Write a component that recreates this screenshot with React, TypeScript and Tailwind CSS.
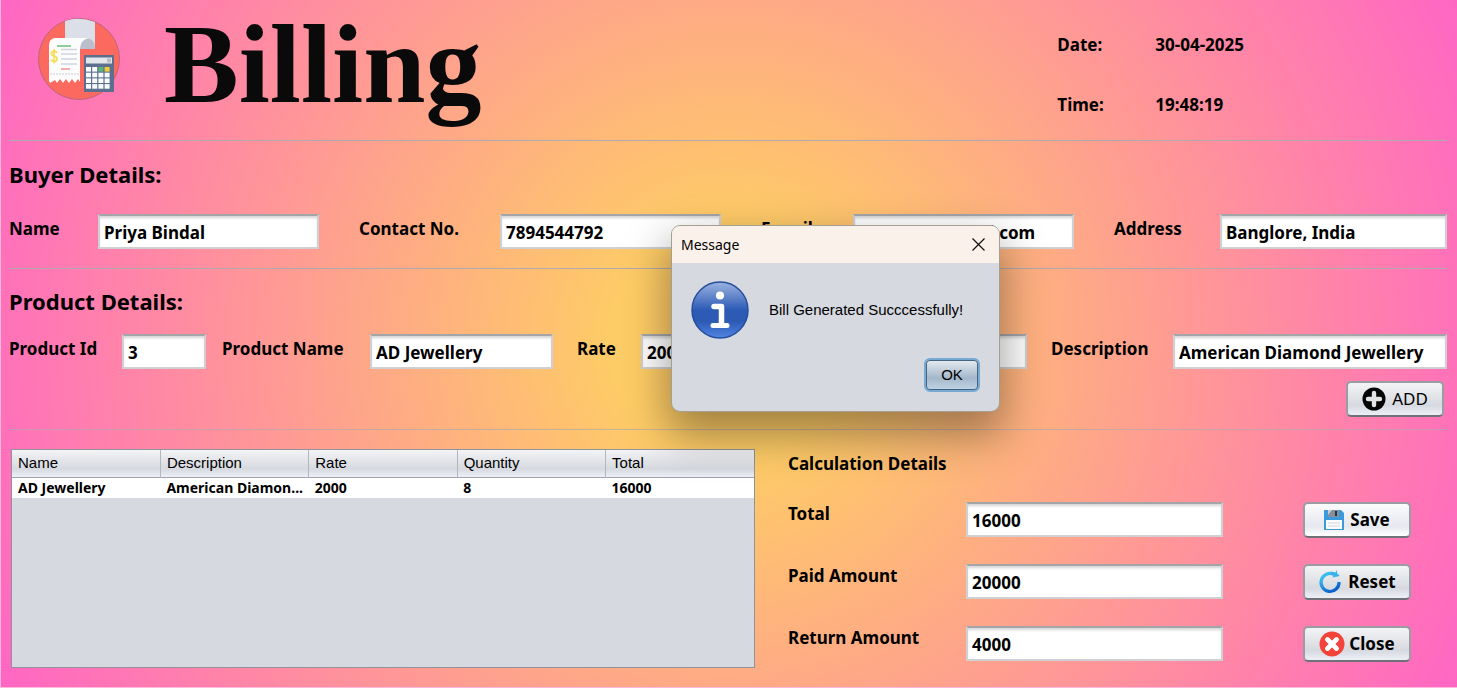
import type { ReactNode } from "react";

const labelText = "text-[17px] font-bold text-black whitespace-nowrap";

function Field({ id, label, value, labelClass = "leading-[30px]" }: { id: string; label: string; value: string; labelClass?: string }) {
  return (
    <>
      <label htmlFor={id} className={`${labelText} ${labelClass}`}>
        {label}
      </label>
      <input
        id={id}
        type="text"
        defaultValue={value}
        className="h-[35px] w-full min-w-0 border-2 border-[#cfd0d4] border-t-[#a4a5a9] bg-white px-1 pt-0.5 text-[17px] font-bold text-black shadow-[inset_0_3px_3px_-1px_#d4d4d6] outline-none"
      />
    </>
  );
}

function ActionButton({ children, className }: { children: ReactNode; className: string }) {
  return (
    <button
      type="button"
      className={`flex items-center justify-center rounded-[5px] border-2 border-[#9a9ca3] border-b-[#6f7178] text-[17px] text-black ${className}`}
    >
      {children}
    </button>
  );
}

const greyFill = "bg-linear-to-b from-[#f4f4f6] via-[#d6d9df] via-70% to-[#eef0f8]";
const lightFill = "bg-linear-to-b from-[#fbfbfc] via-[#e6e8ef] via-70% to-white";

function BillingLogo() {
  return (
    <svg viewBox="0 0 82 82" className="size-[82px]" aria-hidden="true">
      <circle cx="41" cy="41" r="40.5" fill="#fc6a5f" stroke="#b9667f" strokeWidth="1" />
      <path d="M27 3 Q41-2 57 4 V31 H27Z" fill="#dcdfe7" />
      <path d="M42 31 Q42 21 50 20.500 Q57 21.500 57 31Z" fill="#b9bfcb" />
      <path d="M17 20 H50 Q43 22 42 30 V64 L40 61 L37 65 L34 61 L31 65 L28 61 L25 65 L22 61 L19 65 L17 62 L12 65 L11 63 V27 Q11 21 17 20Z" fill="#fcfcfd" />
      <path d="M19 28 H33" stroke="#8fcf9b" strokeWidth="2" />
      <path d="M23 31.500 H39 M23 36 H39 M23 41 H39 M23 46 H39" stroke="#ced3df" strokeWidth="1.400" />
      <path d="M23 51 H32" stroke="#ef7775" strokeWidth="1.200" />
      <path d="M12 56 H42" stroke="#c9ccd5" strokeWidth="1" strokeDasharray="2 1" />
      <path d="M19 35 Q18 33 16 33 Q13.500 33 13.500 35.500 Q13.500 37.500 16 38 Q19 38.500 19 41 Q19 43.500 16 43.500 Q14 43.500 13 41.500 M16 31 V45.500" fill="none" stroke="#f6dc58" strokeWidth="1.700" />
      <rect x="46" y="37" width="30" height="37" fill="#5d6f8f" />
      <rect x="48" y="39.500" width="26" height="6" fill="#e3e7ec" />
      <rect x="69" y="40.500" width="4" height="4" fill="#b7bcc5" />
      {[0, 1, 2, 3].map((row) =>
        [0, 1, 2, 3].map((col) => (
          <rect
            key={`${row}-${col}`}
            x={48 + col * 6.2}
            y={49 + row * 5.7}
            width="5"
            height="4.600"
            fill={row === 0 && col === 2 ? "#5cb57a" : row === 0 && col === 3 ? "#f0cb3c" : "#fbfcfd"}
          />
        )),
      )}
    </svg>
  );
}

function PlusIcon() {
  return (
    <svg viewBox="0 0 24 24" className="size-6" aria-hidden="true">
      <circle cx="12" cy="12" r="11.500" fill="#050505" />
      <path d="M12 6 V18 M6 12 H18" stroke="#e2e3e7" strokeWidth="4.400" strokeLinecap="round" />
    </svg>
  );
}

function SaveIcon() {
  return (
    <svg viewBox="0 0 20 20" className="size-5" aria-hidden="true">
      <path d="M0 0 H17 L20 3 V20 H0Z" fill="#3b9ad9" />
      <rect x="4" y="0" width="11" height="7" fill="#85909c" />
      <path d="M4 0 H8 L4 5Z" fill="#c6cdd5" />
      <rect x="11" y="1" width="2" height="5" fill="#26333f" />
      <rect x="2" y="10" width="16" height="9" fill="#f8fafb" />
      <path d="M4 13 H16 M4 16 H16" stroke="#d3d8dc" strokeWidth="1" />
    </svg>
  );
}

function ResetIcon() {
  return (
    <svg viewBox="0 0 24 24" className="size-6" aria-hidden="true">
      <defs>
        <linearGradient id="resetFill" x1="0" y1="0" x2="0.6" y2="1">
          <stop offset="0.2" stopColor="#38bdf0" />
          <stop offset="1" stopColor="#0a61cc" />
        </linearGradient>
      </defs>
      <path d="M16 4.400 A9 9 0 1 0 21 12" fill="none" stroke="url(#resetFill)" strokeWidth="3.200" />
      <path d="M13 1.500 L17.500 2.500 L18.500 0 L19.500 4 L22 6 L14.500 7.500 L15.500 4.800Z" fill="#36b4ea" />
    </svg>
  );
}

function CloseIcon() {
  return (
    <svg viewBox="0 0 26 26" className="size-[26px]" aria-hidden="true">
      <circle cx="13" cy="13" r="12.500" fill="#f4433a" />
      <path d="M8.500 8.500 L17.500 17.500 M17.500 8.500 L8.500 17.500" stroke="#fff" strokeWidth="4.800" strokeLinecap="round" />
    </svg>
  );
}

function InfoIcon() {
  return (
    <svg viewBox="0 0 58 58" className="size-[58px]" aria-hidden="true">
      <defs>
        <linearGradient id="infoFill" x1="0" y1="0" x2="0" y2="1">
          <stop offset="0" stopColor="#9db3e0" />
          <stop offset="0.5" stopColor="#2c5bb5" />
          <stop offset="0.7" stopColor="#2c59b4" />
          <stop offset="1" stopColor="#5285e4" />
        </linearGradient>
      </defs>
      <circle cx="29" cy="29" r="28" fill="url(#infoFill)" stroke="#274f9f" strokeWidth="1.500" />
      <circle cx="29" cy="14.500" r="4" fill="#fff" />
      <path d="M23 25.500 H30.500 V44" fill="none" stroke="#fff" strokeWidth="5.500" strokeLinecap="round" strokeLinejoin="round" />
      <path d="M22 44.500 H36" stroke="#fff" strokeWidth="5" strokeLinecap="round" />
    </svg>
  );
}

function MessageDialog() {
  return (
    <div
      role="dialog"
      aria-labelledby="dialog-title"
      className="absolute top-[225px] left-[670px] w-[329px] overflow-hidden rounded-[9px] border border-[#a59f92] bg-[#d6d9e0] shadow-[0_20px_44px_4px_rgba(0,0,0,0.36)]"
    >
      <div className="flex h-[37px] items-center justify-between bg-[#f9f1ea] pr-3.5 pl-[9px]">
        <h2 id="dialog-title" className="text-[14px] text-black">Message</h2>
        <button type="button" aria-label="Close dialog">
          <svg viewBox="0 0 13 13" className="size-[13px]" aria-hidden="true">
            <path d="M0.500 0.500 L12.500 12.500 M12.500 0.500 L0.500 12.500" stroke="#111" strokeWidth="1.200" />
          </svg>
        </button>
      </div>
      <div className="flex items-center gap-5 px-[19px] pt-[18px] font-['Liberation_Sans',sans-serif] text-[15px] text-black">
        <InfoIcon />
        <p>Bill Generated Succcessfully!</p>
      </div>
      <div className="flex justify-end px-[19px] pt-[19px] pb-[19px] font-['Liberation_Sans',sans-serif]">
        <button
          type="button"
          className="h-[34px] w-[56px] rounded-[6px] border-2 border-[#78a9d2] bg-linear-to-b from-[#e7edf1] via-[#a4b7ca] via-60% to-[#c0d4e8] text-[15px] text-black ring-1 ring-[#456482] ring-inset"
        >
          OK
        </button>
      </div>
    </div>
  );
}

const columns = ["Name", "Description", "Rate", "Quantity", "Total"];
const rows = [["AD Jewellery", "American Diamon...", "2000", "8", "16000"]];

export default function App() {
  return (
    <main className="relative min-h-screen border-b border-l border-[#ffb9dc] bg-[radial-gradient(circle_farthest-corner_at_50%_50%,#fecc66_14%,#ff66c4)] pr-2.5 pl-2 font-['Noto_Sans',sans-serif]">
      <header className="flex h-[141px] items-start border-b border-[#b0a9ae] pl-[29px]">
        <div className="pt-[18px]">
          <BillingLogo />
        </div>
        <h1 className="ml-11 pt-1 font-['Liberation_Serif',serif] text-[112px] leading-[120px] font-bold text-[#0a0a0a]">Billing</h1>
        <dl className="mr-[203px] ml-auto grid grid-cols-[98px_auto] gap-y-[30px] pt-[30px] text-[17px] leading-[30px] font-bold">
          <dt>Date:</dt>
          <dd>30-04-2025</dd>
          <dt>Time:</dt>
          <dd>19:48:19</dd>
        </dl>
      </header>

      <section className="border-b border-[#b0a9ae] pt-[18px] pb-[19px]">
        <h2 className="text-[22px] leading-[30px] font-bold">Buyer Details:</h2>
        <div className="mt-[25px] grid grid-cols-[89px_221fr_181px_221fr_132px_221fr_146px_227fr]">
          <Field id="buyer" label="Name" value="Priya Bindal" />
          <Field id="contact" label="Contact No." value="7894544792" labelClass="pl-10 leading-[30px]" />
          <Field id="email" label="E-mail" value="priya123@gmail.com" labelClass="pl-10 leading-[30px]" />
          <Field id="address" label="Address" value="Banglore, India" labelClass="pl-10 leading-[30px]" />
        </div>
      </section>

      <section className="border-b border-[#b0a9ae]/70 pt-[17px] pb-[12px]">
        <h2 className="text-[22px] leading-[30px] font-bold">Product Details:</h2>
        <div className="mt-[18px] grid grid-cols-[113px_84fr_164px_183fr_88px_144fr_120px_122fr_146px_274fr]">
          <Field id="product-id" label="Product Id" value="3" />
          <Field id="product-name" label="Product Name" value="AD Jewellery" labelClass="pl-4 leading-[30px]" />
          <Field id="rate" label="Rate" value="2000" labelClass="pl-6 leading-[30px]" />
          <Field id="quantity" label="Quantity" value="8" labelClass="pl-6 leading-[30px]" />
          <Field id="description" label="Description" value="American Diamond Jewellery" labelClass="pl-6 leading-[30px]" />
        </div>
        <div className="mt-3 flex justify-end pr-[3px]">
          <ActionButton className={`h-[36px] w-[98px] gap-1.5 ${greyFill}`}>
            <PlusIcon />
            ADD
          </ActionButton>
        </div>
      </section>

      <div className="grid grid-cols-[744fr_659fr] gap-[33px] pt-[19px] pl-0.5">
        <div className="h-[219px] border border-[#8f939c] bg-[#d6d9e0]">
          <table className="w-full table-fixed border-collapse text-left">
            <thead className={`font-['Liberation_Sans',sans-serif] text-[15px] ${greyFill}`}>
              <tr className="h-[27px] border-b border-[#9ea2ab]">
                {columns.map((column) => (
                  <th key={column} scope="col" className="border-r border-[#b3b6bd] px-1.5 font-normal last:border-r-0">
                    {column}
                  </th>
                ))}
              </tr>
            </thead>
            <tbody className="bg-white text-[14px] leading-5 font-bold">
              {rows.map((row) => (
                <tr key={row[0]} className="h-5">
                  {row.map((cell) => (
                    <td key={cell} className="truncate pl-1.5">
                      {cell}
                    </td>
                  ))}
                </tr>
              ))}
            </tbody>
          </table>
        </div>

        <section>
          <h2 className={`${labelText} leading-[30px]`}>Calculation Details</h2>
          <div className="mt-[23px] flex items-start">
            <div className="grid flex-1 grid-cols-[178px_1fr] gap-y-[27px]">
              <Field id="total" label="Total" value="16000" labelClass="leading-6" />
              <Field id="paid" label="Paid Amount" value="20000" labelClass="leading-6" />
              <Field id="return" label="Return Amount" value="4000" labelClass="leading-6" />
            </div>
            <div className="mr-9 ml-20 grid w-[108px] gap-y-[26px]">
              <ActionButton className={`h-[36px] gap-1.5 font-bold ${lightFill}`}>
                <SaveIcon />
                Save
              </ActionButton>
              <ActionButton className={`h-[36px] gap-1.5 font-bold ${greyFill}`}>
                <ResetIcon />
                Reset
              </ActionButton>
              <ActionButton className={`h-[36px] gap-1 font-bold ${greyFill}`}>
                <CloseIcon />
                Close
              </ActionButton>
            </div>
          </div>
        </section>
      </div>

      <MessageDialog />
    </main>
  );
}
